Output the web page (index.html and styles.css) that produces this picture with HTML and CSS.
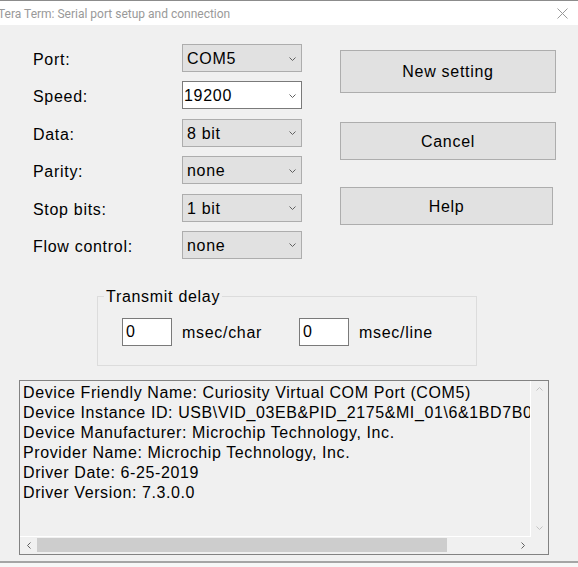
FILE: index.html
```html
<!DOCTYPE html>
<html>
<head>
<meta charset="utf-8">
<link rel="stylesheet" href="styles.css">
</head>
<body>
<div class="window">
  <div class="titlebar">
    <span class="title">Tera Term: Serial port setup and connection</span>
    <svg class="close" width="11" height="11" viewBox="0 0 11 11"><path d="M0.5 0.5 L10.5 10.5 M10.5 0.5 L0.5 10.5" stroke="#999" stroke-width="1" fill="none"/></svg>
  </div>
  <div class="dialog">
    <div class="top">
      <div class="fields">
        <span class="label">Port:</span>
        <div class="combo"><span>COM5</span><svg class="chev" width="7" height="4" viewBox="0 0 7 4"><path d="M0.5 0.5 L3.5 3.5 L6.5 0.5" fill="none" stroke="#606060"/></svg></div>
        <span class="label">Speed:</span>
        <div class="combo combo-edit"><span>19200</span><svg class="chev" width="7" height="4" viewBox="0 0 7 4"><path d="M0.5 0.5 L3.5 3.5 L6.5 0.5" fill="none" stroke="#606060"/></svg></div>
        <span class="label">Data:</span>
        <div class="combo"><span>8 bit</span><svg class="chev" width="7" height="4" viewBox="0 0 7 4"><path d="M0.5 0.5 L3.5 3.5 L6.5 0.5" fill="none" stroke="#606060"/></svg></div>
        <span class="label">Parity:</span>
        <div class="combo"><span>none</span><svg class="chev" width="7" height="4" viewBox="0 0 7 4"><path d="M0.5 0.5 L3.5 3.5 L6.5 0.5" fill="none" stroke="#606060"/></svg></div>
        <span class="label">Stop bits:</span>
        <div class="combo"><span>1 bit</span><svg class="chev" width="7" height="4" viewBox="0 0 7 4"><path d="M0.5 0.5 L3.5 3.5 L6.5 0.5" fill="none" stroke="#606060"/></svg></div>
        <span class="label">Flow control:</span>
        <div class="combo"><span>none</span><svg class="chev" width="7" height="4" viewBox="0 0 7 4"><path d="M0.5 0.5 L3.5 3.5 L6.5 0.5" fill="none" stroke="#606060"/></svg></div>
      </div>
      <div class="buttons">
        <button class="btn btn-new">New setting</button>
        <button class="btn btn-cancel">Cancel</button>
        <button class="btn btn-help">Help</button>
      </div>
    </div>
    <fieldset class="group">
      <legend>Transmit delay</legend>
      <div class="delay-row">
        <div class="pair"><div class="edit">0</div><span class="unit">msec/char</span></div>
        <div class="pair"><div class="edit">0</div><span class="unit">msec/line</span></div>
      </div>
    </fieldset>
    <div class="info">
      <div class="info-text">
        <div>Device Friendly Name: Curiosity Virtual COM Port (COM5)</div>
        <div>Device Instance ID: USB\VID_03EB&amp;PID_2175&amp;MI_01\6&amp;1BD7B02A&amp;0&amp;0001</div>
        <div>Device Manufacturer: Microchip Technology, Inc.</div>
        <div>Provider Name: Microchip Technology, Inc.</div>
        <div>Driver Date: 6-25-2019</div>
        <div>Driver Version: 7.3.0.0</div>
      </div>
      <div class="vscroll">
        <div class="sbtn"><svg width="7" height="4" viewBox="0 0 7 4"><path d="M0.5 3.5 L3.5 0.5 L6.5 3.5" fill="none" stroke="#c2c2c2"/></svg></div>
        <div class="sbtn"><svg width="7" height="4" viewBox="0 0 7 4"><path d="M0.5 0.5 L3.5 3.5 L6.5 0.5" fill="none" stroke="#c2c2c2"/></svg></div>
      </div>
      <div class="hscroll">
        <div class="sbtn"><svg width="4" height="7" viewBox="0 0 4 7"><path d="M3.5 0.5 L0.5 3.5 L3.5 6.5" fill="none" stroke="#606060"/></svg></div>
        <div class="track"><div class="thumb"></div></div>
        <div class="sbtn"><svg width="4" height="7" viewBox="0 0 4 7"><path d="M0.5 0.5 L3.5 3.5 L0.5 6.5" fill="none" stroke="#606060"/></svg></div>
      </div>
      <div class="corner"></div>
    </div>
  </div>
  <div class="bottom-edge"></div>
</div>
</body>
</html>
```
FILE: styles.css
```css
* { box-sizing: border-box; }
html, body { margin: 0; padding: 0; }
body {
  width: 578px;
  height: 567px;
  overflow: hidden;
  background: #f0f0f0;
  font-family: "Liberation Sans", Arial, sans-serif;
  font-size: 16px;
  letter-spacing: 0.7px;
  color: #000;
}
.titlebar {
  height: 25px;
  background: #fff;
  border-top: 1px solid #8c8c8c;
  display: flex;
  align-items: center;
  justify-content: space-between;
  padding-right: 10px;
  overflow: hidden;
}
.title {
  font-family: Roboto, "Noto Sans", sans-serif;
  font-size: 12px;
  letter-spacing: 0;
  color: #999;
  margin-left: -2px;
  padding-top: 1px;
  white-space: nowrap;
}
.close { display: block; margin-top: 1px; }
.dialog {
  height: 536px;
  padding-top: 19px;
}
.top {
  display: flex;
  align-items: flex-start;
  padding-left: 33px;
}
.fields {
  display: grid;
  grid-template-columns: 149px 120px;
  grid-auto-rows: 28px;
  row-gap: 9.4px;
  align-items: center;
}
.label { white-space: nowrap; line-height: 18px; padding-top: 4px; }
.combo {
  height: 28px;
  background: #e1e1e1;
  border: 1px solid #adadad;
  display: flex;
  align-items: center;
  justify-content: space-between;
  padding: 2px 5px 0 4px;
}
.combo .chev { margin-top: -1px; }
.combo-edit {
  background: #fff;
  border-color: #7a7a7a;
  padding-left: 1px;
}
.chev { display: block; }
.buttons {
  margin-left: 38px;
  margin-top: 6px;
  display: flex;
  flex-direction: column;
}
.btn {
  font: inherit;
  letter-spacing: inherit;
  color: #000;
  background: #e1e1e1;
  border: 1px solid #adadad;
  padding: 1px 0 0 0;
  margin: 0;
}
.btn-new { width: 216px; height: 43px; padding-top: 0; }
.btn-cancel { width: 216px; height: 38px; margin-top: 29px; }
.btn-help { width: 213px; height: 38px; margin-top: 27px; }
.group {
  margin: 28px 0 0 97px;
  width: 380px;
  border: 1px solid #dcdcdc;
  padding: 12px 0 19px 0;
  min-width: 0;
}
.group legend {
  margin-left: 6px;
  padding: 1px 2px 0;
  line-height: 18px;
}
.delay-row {
  display: flex;
  padding-left: 24px;
}
.pair {
  width: 177px;
  display: flex;
  align-items: center;
}
.edit {
  width: 50px;
  height: 28px;
  background: #fff;
  border: 1px solid #7a7a7a;
  padding: 0 0 0 3px;
  display: flex;
  align-items: center;
}
.unit { margin-left: 10px; white-space: nowrap; padding-top: 2px; }
.info {
  margin: 14px 0 0 19px;
  width: 530px;
  height: 175px;
  border: 1px solid #828282;
  display: grid;
  grid-template-columns: 511px 17px;
  grid-template-rows: 156px 17px;
}
.info-text {
  overflow: hidden;
  white-space: nowrap;
  line-height: 20px;
  letter-spacing: 0.6px;
  padding: 2px 0 0 3px;
  border-right: 1px solid #fff;
  border-bottom: 1px solid #fff;
}
.vscroll {
  display: flex;
  flex-direction: column;
  justify-content: space-between;
}
.vscroll .sbtn { height: 17px; display: flex; align-items: center; justify-content: center; }
.hscroll {
  display: flex;
  align-items: center;
}
.hscroll .sbtn { width: 17px; height: 17px; display: flex; align-items: center; justify-content: center; flex: none; }
.track { flex: 1; height: 17px; display: flex; align-items: center; }
.thumb { width: 410px; height: 14px; background: #cdcdcd; }
.bottom-edge {
  height: 6px;
  border-top: 2px solid #a5a5a5;
  background: #f7f7f7;
}
```
